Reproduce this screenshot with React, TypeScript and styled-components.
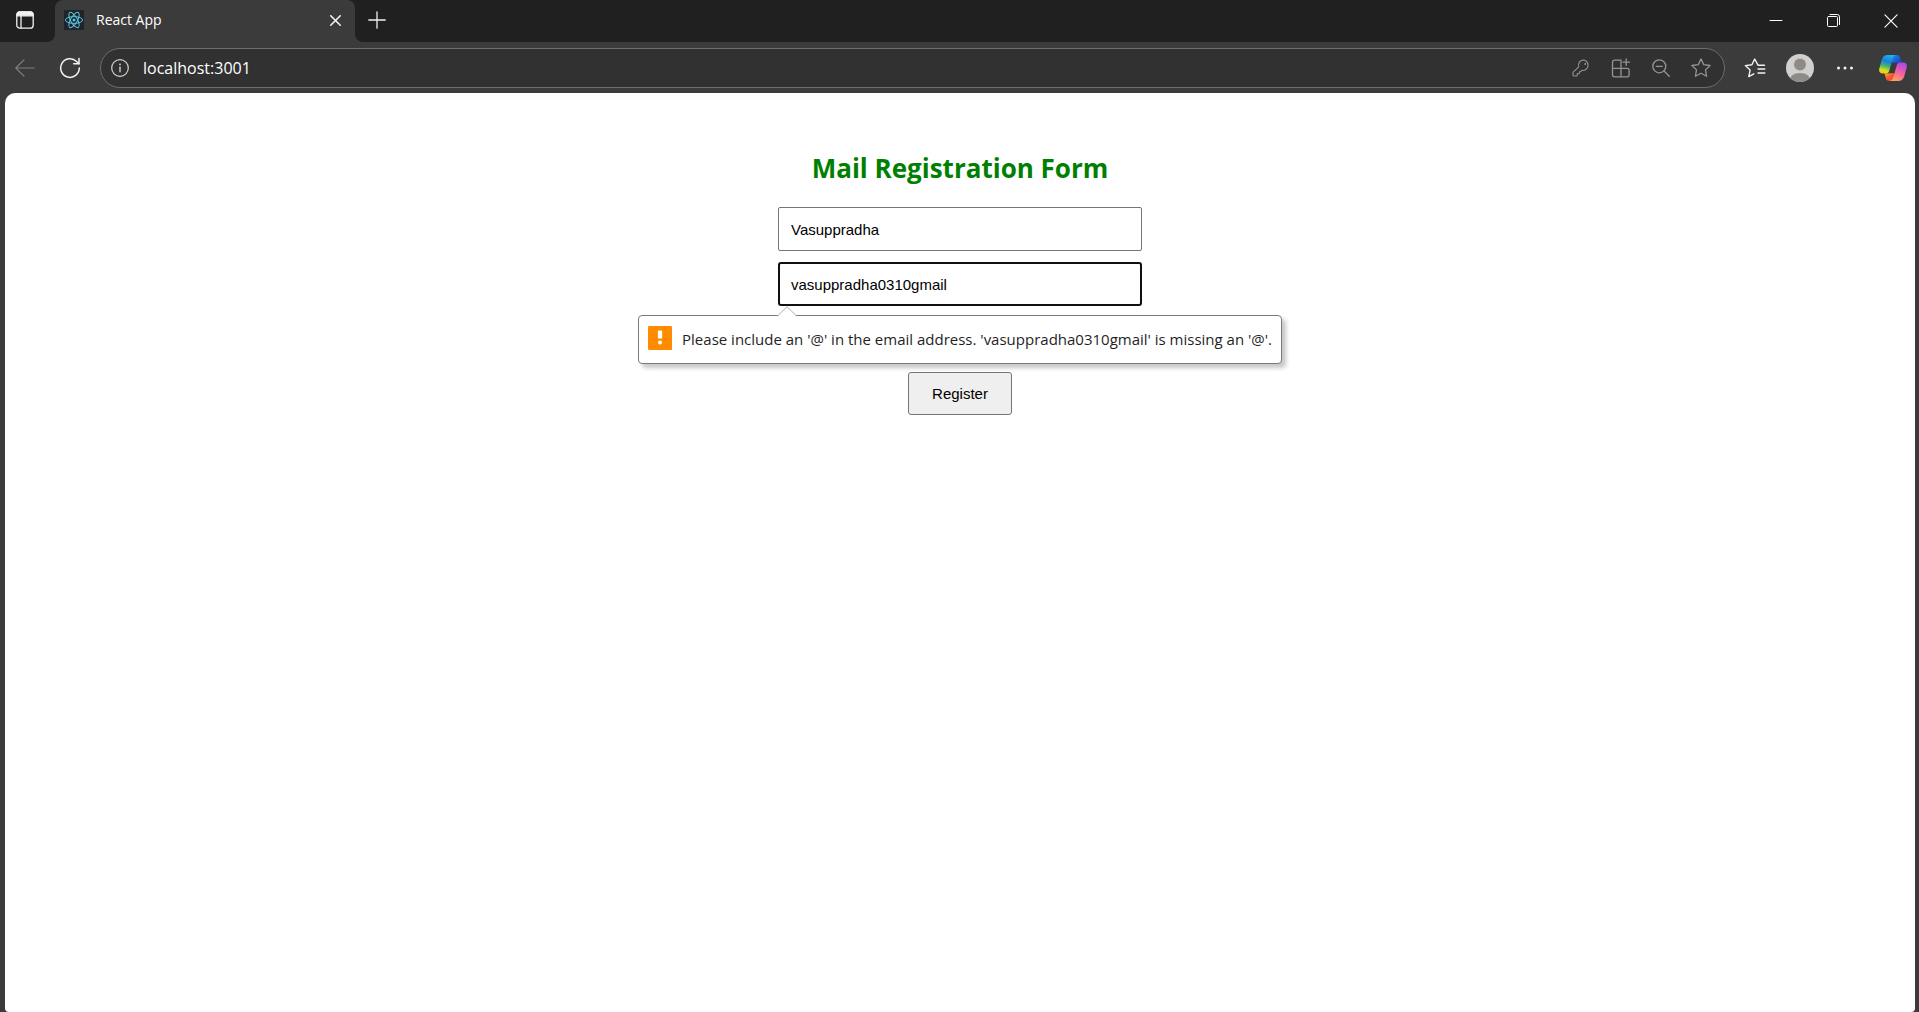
import React from "react";
import styled, { createGlobalStyle } from "styled-components";

const UI_FONT = `"Segoe UI", "Open Sans", "Noto Sans", sans-serif`;
const FORM_FONT = `"Liberation Sans", Arial, sans-serif`;

const GlobalStyle = createGlobalStyle`
  *, *::before, *::after { box-sizing: border-box; }
  html, body { margin: 0; padding: 0; }
  body { background: #3b3b3b; font-family: ${UI_FONT}; overflow: hidden; }
`;

const Window = styled.div`
  display: flex;
  flex-direction: column;
  min-height: 100vh;
  background: #3b3b3b;
`;

const TitleBar = styled.header`
  display: flex;
  height: 42px;
`;

const TabActions = styled.div`
  display: flex;
  width: 55px;
  padding-left: 5px;
  background: #202020;
  border-bottom-right-radius: 8px;
`;

const TabSlot = styled.div`
  width: 300px;
  background: linear-gradient(#202020 50%, #3b3b3b 50%);
`;

const Tab = styled.div`
  display: flex;
  align-items: center;
  height: 100%;
  padding: 0 4px 2px 9px;
  gap: 12px;
  background: #3b3b3b;
  border-radius: 8px 8px 0 0;
`;

const TabTitle = styled.span`
  flex: 1;
  color: #ffffff;
  font-size: 14px;
  line-height: 20px;
`;

const TitleRest = styled.div`
  display: flex;
  flex: 1;
  justify-content: space-between;
  padding-left: 4px;
  background: #202020;
  border-bottom-left-radius: 8px;
`;

const WindowControls = styled.div`
  display: flex;
`;

const IconButton = styled.button<{ $width?: number; $height?: number; $color?: string }>`
  display: flex;
  flex: none;
  align-items: center;
  justify-content: center;
  width: ${(p) => p.$width ?? 36}px;
  height: ${(p) => p.$height ?? 36}px;
  padding: 0;
  border: 0;
  background: transparent;
  color: ${(p) => p.$color ?? "#f2f2f2"};

  svg { display: block; }
`;

const Toolbar = styled.nav`
  display: flex;
  align-items: center;
  height: 51px;
  padding: 0 5px;
`;

const NavButtons = styled.div`
  display: flex;
  gap: 5px;
  margin-right: 10px;
`;

const AddressBar = styled.div`
  display: flex;
  flex: 1;
  align-items: center;
  height: 40px;
  padding: 0 7px 0 3px;
  border: 1px solid #6d6d6d;
  border-radius: 20px;
  background: #313131;
`;

const AddressInput = styled.input`
  flex: 1;
  min-width: 0;
  padding: 0;
  margin-left: 7px;
  border: 0;
  outline: 0;
  background: transparent;
  color: #ffffff;
  font-family: ${UI_FONT};
  font-size: 16px;
  line-height: 24px;
`;

const AddressActions = styled.div`
  display: flex;
  gap: 8px;
`;

const BrowserActions = styled.div`
  display: flex;
  gap: 9px;
  margin-left: 12px;
`;

const Page = styled.main`
  display: flex;
  flex: 1;
  flex-direction: column;
  align-items: center;
  margin: 0 4px 0 5px;
  padding-top: 57px;
  border-radius: 10px 10px 4px 4px;
  background: #ffffff;
`;

const Heading = styled.h2`
  margin: 0 0 21px;
  color: #008000;
  font-size: 26px;
  font-weight: 700;
  line-height: 36px;
`;

const Form = styled.form`
  display: flex;
  flex-direction: column;
  align-items: center;
  gap: 11px;
`;

const Field = styled.div`
  position: relative;
  display: flex;
  width: 364px;
`;

const TextInput = styled.input<{ $active?: boolean }>`
  width: 100%;
  height: 44px;
  padding: 0 ${(p) => (p.$active ? 11 : 12)}px;
  border: ${(p) => (p.$active ? "2px solid #101010" : "1px solid #767676")};
  border-radius: ${(p) => (p.$active ? 3 : 2)}px;
  outline: 0;
  background: #ffffff;
  color: #000000;
  font-family: ${FORM_FONT};
  font-size: 15px;
`;

const SubmitButton = styled.button`
  height: 43px;
  padding: 0 23px;
  border: 1px solid #767676;
  border-radius: 3px;
  background: #efefef;
  color: #000000;
  font-family: ${FORM_FONT};
  font-size: 15px;
`;

const Bubble = styled.div`
  position: absolute;
  z-index: 1;
  top: 53px;
  left: 50%;
  display: flex;
  align-items: flex-start;
  gap: 10px;
  width: 644px;
  height: 49px;
  padding: 9px;
  transform: translateX(-50%);
  border: 1px solid #7b7b7b;
  border-radius: 4px;
  background: #ffffff;
  box-shadow: 4px 4px 4px rgba(0, 0, 0, 0.22);
`;

const BubbleArrow = styled.svg`
  position: absolute;
  top: -10px;
  left: 138px;
`;

const BubbleText = styled.span`
  color: #1f1f1f;
  font-size: 15px;
  line-height: 28px;
  white-space: nowrap;
`;

const stroke = {
  fill: "none",
  stroke: "currentColor",
  strokeLinecap: "round" as const,
  strokeLinejoin: "round" as const,
};

const TabActionsIcon = () => (
  <svg width="18" height="18" viewBox="0 0 18 18" {...stroke} strokeWidth="1.3">
    <rect x="0.8" y="0.8" width="16.4" height="16.4" rx="3" />
    <path d="M1 3.8A3 3 0 0 1 4 1h10a3 3 0 0 1 3 2.8v1H1z" fill="currentColor" />
    <path d="M5 5v12" />
  </svg>
);

const ReactIcon = () => (
  <svg width="20" height="20" viewBox="0 0 20 20" fill="none" stroke="#58c4dc" strokeWidth="1">
    <rect width="20" height="20" rx="1" fill="#20232a" stroke="none" />
    <circle cx="10" cy="10" r="1.5" fill="#58c4dc" stroke="none" />
    <ellipse cx="10" cy="10" rx="8.6" ry="3.4" />
    <ellipse cx="10" cy="10" rx="8.6" ry="3.4" transform="rotate(60 10 10)" />
    <ellipse cx="10" cy="10" rx="8.6" ry="3.4" transform="rotate(120 10 10)" />
  </svg>
);

const CrossIcon = ({ size, weight }: { size: number; weight: number }) => (
  <svg width={size} height={size} viewBox="0 0 12 12" {...stroke} strokeWidth={weight}>
    <path d="M0.8 0.8l10.4 10.4M11.2 0.8L0.8 11.2" />
  </svg>
);

const PlusIcon = () => (
  <svg width="18" height="18" viewBox="0 0 18 18" {...stroke} strokeWidth="1.3">
    <path d="M9 .8v16.4M.8 9h16.4" />
  </svg>
);

const MinimizeIcon = () => (
  <svg width="14" height="14" viewBox="0 0 14 14" {...stroke} strokeWidth="1">
    <path d="M1 6.5h12" />
  </svg>
);

const RestoreIcon = () => (
  <svg width="14" height="14" viewBox="0 0 14 14" {...stroke} strokeWidth="1">
    <rect x="0.5" y="2.5" width="10" height="10" rx="1" />
    <path d="M3 .5h7.2A2.3 2.3 0 0 1 12.5 2.8V10.5" />
  </svg>
);

const BackIcon = () => (
  <svg width="20" height="18" viewBox="0 0 20 18" {...stroke} strokeWidth="1.2">
    <path d="M19.3 9H.8M9 .8L.8 9 9 17.2" />
  </svg>
);

const ReloadIcon = () => (
  <svg width="22" height="22" viewBox="0 0 22 22" {...stroke} strokeWidth="1.5">
    <path d="M20.3 11A9.3 9.3 0 1 1 17.6 4.5L20 6.8" />
    <path d="M20 1.5v5.3h-5.3" />
  </svg>
);

const InfoIcon = () => (
  <svg width="18" height="18" viewBox="0 0 18 18" {...stroke} strokeWidth="1.2">
    <circle cx="9" cy="9" r="8.3" />
    <path d="M9 8.2v4.6" strokeWidth="1.4" />
    <circle cx="9" cy="5.4" r="0.9" fill="currentColor" stroke="none" />
  </svg>
);

const KeyIcon = () => (
  <svg width="18" height="18" viewBox="0 0 18 18" {...stroke} strokeWidth="1.1">
    <path d="M11.7 1a5.2 5.2 0 0 0-5 6.8L1.2 13.2a.8.8 0 0 0-.2.5v2.5c0 .4.3.8.8.8h2.6c.4 0 .8-.3.8-.8v-1.4h1.4c.4 0 .8-.3.8-.8v-1.3h1.2l1.3-1.3a5.2 5.2 0 1 0 1.8-10.4z" />
    <circle cx="13.2" cy="4.9" r="1" fill="currentColor" stroke="none" />
  </svg>
);

const AppsIcon = () => (
  <svg width="20" height="20" viewBox="0 0 20 20" {...stroke} strokeWidth="1.3">
    <path d="M10 2.2H3.5a2 2 0 0 0-2 2v12.6a2 2 0 0 0 2 2h12.6a2 2 0 0 0 2-2v-4.5a2 2 0 0 0-2-2H1.5M10 2.2v16.6" />
    <path d="M15.2 .8v6.6M11.9 4.1h6.6" />
  </svg>
);

const ZoomOutIcon = () => (
  <svg width="18" height="18" viewBox="0 0 18 18" {...stroke} strokeWidth="1.3">
    <circle cx="7.3" cy="7.3" r="6.5" />
    <path d="M12 12l5.3 5.3M4.3 7.3h6" />
  </svg>
);

const StarIcon = () => (
  <svg width="20" height="20" viewBox="0 0 20 20" {...stroke} strokeWidth="1.3">
    <path d="M10 .9l2.7 5.7 6.4.9-4.6 4.4 1.1 6.4L10 15.3l-5.6 3 1.1-6.4L.9 7.5l6.4-.9z" />
  </svg>
);

const FavoritesIcon = () => (
  <svg width="22" height="20" viewBox="0 0 22 20" {...stroke} strokeWidth="1.4">
    <path d="M20.5 7.2h-6.5L10.7 1 7.9 6.8l-6.6.8 4.8 4.5-1.3 6.5 5-2.8" />
    <path d="M14 11h6.8M14 15h6.8" />
  </svg>
);

const AvatarIcon = () => (
  <svg width="28" height="28" viewBox="0 0 28 28">
    <clipPath id="avatar-clip">
      <circle cx="14" cy="14" r="14" />
    </clipPath>
    <circle cx="14" cy="14" r="14" fill="#d2d0ce" />
    <g clipPath="url(#avatar-clip)" fill="#8f8b88">
      <circle cx="14" cy="10.5" r="6" />
      <path d="M3.5 28c0-6 4-9 10.5-9s10.5 3 10.5 9z" />
    </g>
  </svg>
);

const DotsIcon = () => (
  <svg width="18" height="4" viewBox="0 0 18 4" fill="currentColor">
    <circle cx="2.5" cy="2" r="1.5" />
    <circle cx="9" cy="2" r="1.5" />
    <circle cx="15.5" cy="2" r="1.5" />
  </svg>
);

const CopilotIcon = () => (
  <svg width="28" height="26" viewBox="0 0 28 26">
    <defs>
      <linearGradient id="cp-left" x1="0.6" y1="0" x2="0.35" y2="1">
        <stop offset="0" stopColor="#18b4f0" />
        <stop offset="0.35" stopColor="#1a80e0" />
        <stop offset="0.6" stopColor="#3bb273" />
        <stop offset="0.85" stopColor="#d8e021" />
        <stop offset="1" stopColor="#f5c518" />
      </linearGradient>
      <linearGradient id="cp-right" x1="0.7" y1="0" x2="0.3" y2="1">
        <stop offset="0" stopColor="#a44be8" />
        <stop offset="0.45" stopColor="#ee5aa8" />
        <stop offset="1" stopColor="#ffa45c" />
      </linearGradient>
      <linearGradient id="cp-top" x1="0" y1="0" x2="1" y2="1">
        <stop offset="0" stopColor="#1b8fe8" />
        <stop offset="1" stopColor="#1a3fc4" />
      </linearGradient>
      <linearGradient id="cp-bottom" x1="0" y1="0" x2="1" y2="1">
        <stop offset="0" stopColor="#f2b01e" />
        <stop offset="0.5" stopColor="#f4582c" />
        <stop offset="1" stopColor="#ee4a55" />
      </linearGradient>
    </defs>
    <path d="M12 0h5.5c2 0 3.2 1 3.7 2.7L22.5 7.7H13z" fill="url(#cp-top)" />
    <path d="M16 26h-5.5c-2 0-3.2-1-3.7-2.7L5.5 18.3H15z" fill="url(#cp-bottom)" />
    <path d="M17.5 0H8C5 0 3.4 2.3 2.5 5.4L.4 13.2c-.9 3.2.3 5.3 3.3 5.3H6.8c2 0 3-1.200 3.500-3l3.300-11.500C14.300 1.500 15.500.2 17.500 0z" fill="url(#cp-left)" />
    <path d="M10.5 26H20c3 0 4.6-2.3 5.5-5.4l2.1-7.8c.9-3.2-.3-5.3-3.3-5.3H21.2c-2 0-3 1.200-3.500 3l-3.300 11.500c-.7 2.500-1.900 3.800-3.900 4z" fill="url(#cp-right)" />
  </svg>
);

const WarningIcon = () => (
  <svg width="26" height="26" viewBox="0 0 26 26">
    <rect width="26" height="26" rx="1.5" fill="#ff8c00" />
    <path d="M10.7 5h4.6v8.5h-4.6z" fill="#ffffff" />
    <circle cx="13" cy="17.8" r="2.2" fill="#ffffff" />
  </svg>
);

function BrowserChrome() {
  return (
    <>
      <TitleBar>
        <TabActions>
          <IconButton $width={40} $height={39} aria-label="Tab actions"><TabActionsIcon /></IconButton>
        </TabActions>
        <TabSlot>
          <Tab>
            <ReactIcon />
            <TabTitle>React App</TabTitle>
            <IconButton $width={32} $height={32} aria-label="Close tab"><CrossIcon size={11} weight={1.7} /></IconButton>
          </Tab>
        </TabSlot>
        <TitleRest>
          <IconButton $height={39} aria-label="New tab"><PlusIcon /></IconButton>
          <WindowControls>
            <IconButton $width={58} $height={42} $color="#ffffff" aria-label="Minimize"><MinimizeIcon /></IconButton>
            <IconButton $width={58} $height={42} $color="#ffffff" aria-label="Restore"><RestoreIcon /></IconButton>
            <IconButton $width={56} $height={42} $color="#ffffff" aria-label="Close"><CrossIcon size={14} weight={1} /></IconButton>
          </WindowControls>
        </TitleRest>
      </TitleBar>
      <Toolbar>
        <NavButtons>
          <IconButton $width={40} $color="#7f7f7f" aria-label="Back"><BackIcon /></IconButton>
          <IconButton $width={40} aria-label="Refresh"><ReloadIcon /></IconButton>
        </NavButtons>
        <AddressBar>
          <IconButton $width={32} $height={32} $color="#d0d0d0" aria-label="Site information"><InfoIcon /></IconButton>
          <AddressInput aria-label="Address" defaultValue="localhost:3001" spellCheck={false} />
          <AddressActions>
            <IconButton $width={32} $height={32} $color="#949494" aria-label="Passwords"><KeyIcon /></IconButton>
            <IconButton $width={32} $height={32} $color="#949494" aria-label="Install app"><AppsIcon /></IconButton>
            <IconButton $width={32} $height={32} $color="#949494" aria-label="Zoom"><ZoomOutIcon /></IconButton>
            <IconButton $width={32} $height={32} $color="#949494" aria-label="Add to favorites"><StarIcon /></IconButton>
          </AddressActions>
        </AddressBar>
        <BrowserActions>
          <IconButton aria-label="Favorites"><FavoritesIcon /></IconButton>
          <IconButton aria-label="Profile"><AvatarIcon /></IconButton>
          <IconButton aria-label="Settings and more"><DotsIcon /></IconButton>
          <IconButton $width={42} aria-label="Copilot"><CopilotIcon /></IconButton>
        </BrowserActions>
      </Toolbar>
    </>
  );
}

function RegistrationForm() {
  return (
    <Form noValidate onSubmit={(e) => e.preventDefault()}>
      <Field>
        <TextInput type="text" aria-label="Name" defaultValue="Vasuppradha" />
      </Field>
      <Field>
        <TextInput $active type="email" aria-label="Email" aria-describedby="email-error" defaultValue="vasuppradha0310gmail" />
        <Bubble id="email-error" role="alert">
          <BubbleArrow width="20" height="11" viewBox="0 0 20 11">
            <path d="M0.5 10L10 0.7 19.5 10V11H.5z" fill="#ffffff" />
            <path d="M0.5 10L10 0.7 19.5 10" fill="none" stroke="#adadad" />
          </BubbleArrow>
          <WarningIcon />
          <BubbleText>
            Please include an '@' in the email address. 'vasuppradha0310gmail' is missing an '@'.
          </BubbleText>
        </Bubble>
      </Field>
      <Field>
        <TextInput type="password" aria-label="Password" />
      </Field>
      <SubmitButton type="submit">Register</SubmitButton>
    </Form>
  );
}

export default function App() {
  return (
    <>
      <GlobalStyle />
      <Window>
        <BrowserChrome />
        <Page>
          <Heading>Mail Registration Form</Heading>
          <RegistrationForm />
        </Page>
      </Window>
    </>
  );
}
